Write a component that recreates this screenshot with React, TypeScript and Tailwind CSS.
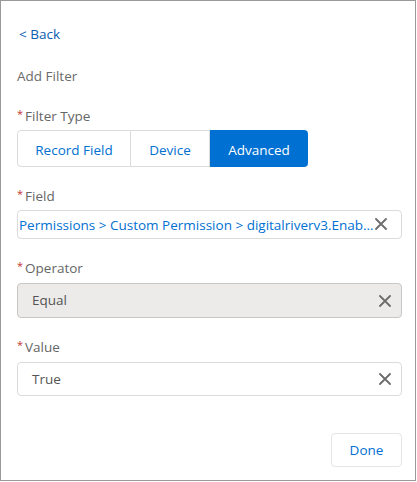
import React from "react";

const XIcon = ({ className = "" }: { className?: string }) => (
  <svg width="12" height="12" viewBox="0 0 12 12" className={className}>
    <path d="M1 1 L11 11 M11 1 L1 11" stroke="#6b6b6b" strokeWidth="1.8" strokeLinecap="round" />
  </svg>
);

const Label = ({ text, className = "" }: { text: string; className?: string }) => (
  <div className={`flex items-center h-5 leading-5 text-[13.5px] text-[#666666] ${className}`}>
    <span className="text-[#c23934] text-[11px] mr-[2px] -mt-[4px]">*</span>
    <span>{text}</span>
  </div>
);

export default function App() {
  return (
    <div
      className="w-[416px] h-[481px] border border-[#9a9a9a] bg-white flex flex-col pl-[16px] pr-[13px] pt-[23px]"
      style={{ fontFamily: '"Open Sans", "Noto Sans", sans-serif' }}
    >
      <div className="h-5 leading-5 text-[13.5px] text-[#0a5db0] pl-[2px]">&lt; Back</div>
      <div className="h-5 leading-5 text-[13.5px] text-[#6b6b6b] mt-[22px]">Add Filter</div>

      <Label text="Filter Type" className="mt-[20px]" />
      <div className="mt-[4px] flex h-[37px] w-[291px] text-[13.5px]">
        <div className="w-[114px] flex items-center justify-center pt-[3px] border border-[#dddbda] rounded-l-[4px] text-[#0070d2]">
          Record Field
        </div>
        <div className="w-[79px] flex items-center justify-center pt-[3px] border-y border-r border-[#dddbda] text-[#0070d2]">
          Device
        </div>
        <div className="w-[98px] flex items-center justify-center pt-[3px] bg-[#0070d2] rounded-r-[4px] text-white">
          Advanced
        </div>
      </div>

      <Label text="Field" className="mt-[19px]" />
      <div className="mt-[4px] h-[29px] relative border border-[#dddbda] rounded-[4px] flex items-center pl-[1px] pr-[14px]">
        <span className="block w-[358px] truncate text-[13.5px] text-[#0070d2] leading-5">
          Permissions &gt; Custom Permission &gt; digitalriverv3.EnableDigitalRiverAccess
        </span>
        <XIcon className="absolute right-[14px] top-[7px]" />
      </div>

      <Label text="Operator" className="mt-[19px]" />
      <div className="mt-[5px] h-[35px] border border-[#c9c7c5] bg-[#ecebea] rounded-[4px] flex items-center justify-between pl-[14px] pr-[10px] text-[13.5px] text-[#555555]">
        <span>Equal</span>
        <XIcon />
      </div>

      <Label text="Value" className="mt-[19px]" />
      <div className="mt-[5px] h-[34px] border border-[#dddbda] rounded-[4px] flex items-center justify-between pl-[14px] pr-[10px] text-[13.5px] text-[#555555]">
        <span>True</span>
        <XIcon />
      </div>

      <div className="mt-[37px] flex justify-end">
        <div className="w-[71px] h-[34px] border border-[#e5e5e5] rounded-[4px] flex items-center justify-center text-[13.5px] text-[#0070d2]">
          Done
        </div>
      </div>
    </div>
  );
}
